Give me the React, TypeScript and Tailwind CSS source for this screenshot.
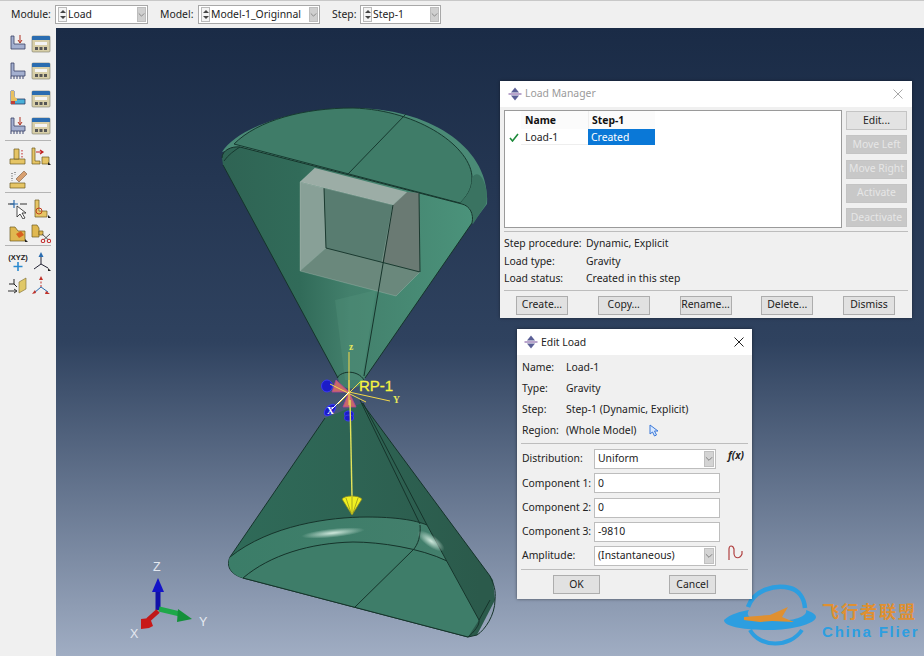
import React from "react";

const FONT = "font-['Noto_Sans',sans-serif]";

function Chevron() {
  return (
    <svg width="9" height="6" viewBox="0 0 9 6" fill="none" stroke="#777" strokeWidth="1">
      <path d="M1 1l3.5 3.5L8 1" />
    </svg>
  );
}

function Spinner() {
  return (
    <div className="w-[9px] mx-[1px] self-stretch border border-[#bbb] flex flex-col items-center justify-around bg-[#f4f4f4]">
      <span className="w-0 h-0 border-x-[3px] border-x-transparent border-b-[3px] border-b-[#444]" />
      <span className="w-0 h-0 border-x-[3px] border-x-transparent border-t-[3px] border-t-[#444]" />
    </div>
  );
}

function TopCombo({ text, w }: { text: string; w: string }) {
  return (
    <div className={`${w} h-[19px] flex items-stretch bg-white border border-[#a8a8a8] p-[1px]`}>
      <Spinner />
      <span className="flex-1 pl-[0px] text-[10.4px] leading-[15px] text-[#222] whitespace-nowrap">{text}</span>
      <div className="w-[9px] bg-[#cfcfcf] border border-[#bdbdbd] flex items-center justify-center">
        <Chevron />
      </div>
    </div>
  );
}

const Ls = {
  a: <path d="M3 2h3v8h11v5H3z" fill="#a4b0d0" stroke="#3a4266" strokeWidth=".8" />,
  tick: <path d="M3 15v3M6 15v3M9 15v3M12 15v3M15 15v3" stroke="#3a4470" strokeWidth="1" />,
  arrow: <path d="M12 1v7M10 6l2 3 2-3" stroke="#b03020" strokeWidth="1" fill="none" />,
};

function Icon({ kind }: { kind: string }) {
  let body: React.ReactNode = null;
  if (kind === "l1") body = <>{Ls.a}{Ls.arrow}</>;
  if (kind === "l2") body = <>{Ls.a}{Ls.tick}</>;
  if (kind === "l3")
    body = (
      <>
        <path d="M3 2h3v8h11v5H3z" fill="#4ab0d8" stroke="#2a3a66" strokeWidth=".8" />
        <path d="M3 2h3v5l3 3v2H3z" fill="#e8c060" />
        <path d="M3 12h4v3H3z" fill="#c04038" />
      </>
    );
  if (kind === "l4") body = <>{Ls.a}{Ls.tick}{Ls.arrow}</>;
  if (kind === "t")
    body = (
      <>
        <rect x="1" y="2" width="18" height="16" rx="1" fill="#d8cfa8" stroke="#7a7a6a" strokeWidth=".6" />
        <path d="M1 3a1 1 0 0 1 1-1h16a1 1 0 0 1 1 1v3H1z" fill="#2a6cb0" />
        <rect x="4" y="8" width="12" height="3" fill="#f4f4f4" />
        <rect x="4" y="13" width="3" height="3" fill="#555" />
        <rect x="8.5" y="13" width="3" height="3" fill="#555" />
        <rect x="13" y="13" width="3" height="3" fill="#555" />
      </>
    );
  if (kind === "p1")
    body = (
      <>
        <path d="M2 13h15v5H2z" fill="#e6c565" stroke="#6a5a20" strokeWidth=".7" />
        <path d="M6 3h5v10H6z" fill="#e6c565" stroke="#6a5a20" strokeWidth=".7" />
        <path d="M14 4v8" stroke="#c02020" strokeWidth="1" strokeDasharray="1.5 1.5" />
      </>
    );
  if (kind === "p2")
    body = (
      <>
        <path d="M1 2h3v13h5v3H1z" fill="#e6c565" stroke="#6a5a20" strokeWidth=".7" />
        <path d="M11 11h7v7h-7z" fill="#e6c565" stroke="#6a5a20" strokeWidth=".7" />
        <path d="M5 6h6M9 4l3 2-3 2" stroke="#c02020" strokeWidth="1.2" fill="none" />
        <path d="M17 16l3 3h-3z" fill="#222" />
      </>
    );
  if (kind === "p3")
    body = (
      <>
        <path d="M2 13h15v5H2z" fill="#e6c565" stroke="#6a5a20" strokeWidth=".7" />
        <path d="M8 9l8-8 3 3-8 8z" fill="#d8a070" stroke="#7a5a40" strokeWidth=".6" />
        <path d="M4 3v8M7 2v3" stroke="#444" strokeWidth="1" strokeDasharray="1 1.5" />
      </>
    );
  if (kind === "s1")
    body = (
      <>
        <path d="M0 5h6M12 5h7" stroke="#333" strokeWidth="1" />
        <path d="M6 1v8M2 5h8" stroke="#2a6cb0" strokeWidth="1.2" />
        <path d="M9 7v11l3-3 3 5 2-1-3-5h4z" fill="#fff" stroke="#222" strokeWidth=".8" />
      </>
    );
  if (kind === "s2")
    body = (
      <>
        <path d="M4 1h4v11h8v6H4z" fill="#e6c565" stroke="#6a5a20" strokeWidth=".7" />
        <circle cx="8" cy="12" r="3" fill="none" stroke="#c04020" strokeWidth="1" />
        <path d="M17 16l3 3h-3z" fill="#222" />
      </>
    );
  if (kind === "s3")
    body = (
      <>
        <path d="M2 4h5l3 4h7v10H2z" fill="#e0b850" stroke="#6a5a20" strokeWidth=".7" />
        <path d="M8 11l5-3 3 4-5 3z" fill="#d86020" />
        <path d="M17 16l3 3h-3z" fill="#222" />
      </>
    );
  if (kind === "s4")
    body = (
      <>
        <path d="M1 2h5l2 3v9H1z" fill="#e0b850" stroke="#6a5a20" strokeWidth=".7" />
        <path d="M8 8h4v4H8z" fill="#e0b850" stroke="#6a5a20" strokeWidth=".7" />
        <circle cx="12" cy="18" r="1.8" fill="none" stroke="#c02020" />
        <circle cx="18" cy="18" r="1.8" fill="none" stroke="#c02020" />
        <path d="M13 16.5L19 11M17 16.5L11 11" stroke="#555" />
      </>
    );
  if (kind === "x1")
    body = (
      <>
        <text x="10" y="8" textAnchor="middle" fontSize="7.5" fontWeight="700" fill="#222" fontFamily="Liberation Sans">(XYZ)</text>
        <path d="M10 10v9M5.5 14.5h9" stroke="#2a8ad0" strokeWidth="1.6" />
      </>
    );
  if (kind === "x2")
    body = (
      <>
        <path d="M10 3v9M10 12l-7 5M10 12l7 4" stroke="#223" strokeWidth="1" />
        <path d="M10 0l-2.5 5h5z" fill="#2a6cb0" />
        <path d="M17 16l3 3h-3z" fill="#222" />
      </>
    );
  if (kind === "x3")
    body = (
      <>
        <path d="M11 6l7-4v11l-7 4z" fill="#e0c868" stroke="#7a6a30" strokeWidth=".6" />
        <path d="M6 3v5H1M6 8l3 3" stroke="#222" strokeWidth="1" />
        <path d="M0 15h8M6 13l3 2-3 2" stroke="#333" fill="none" />
      </>
    );
  if (kind === "x4")
    body = (
      <>
        <path d="M10 2v9" stroke="#c03028" strokeWidth="1" strokeDasharray="2 1.5" />
        <path d="M10 11l-7 6M10 11l7 5" stroke="#2a6cb0" strokeWidth="1" />
        <path d="M10 0l-2 4h4zM1 18l3-4 1 3zM19 18l-4-3-1 3z" fill="#c03028" />
      </>
    );
  return (
    <svg width="20" height="20" viewBox="0 0 20 20" fill="none">
      {body}
    </svg>
  );
}

function IconRow({ a, b, h }: { a: string; b?: string; h: string }) {
  return (
    <div className={`${h} flex items-center pl-[8px] gap-[3px]`}>
      <Icon kind={a} />
      {b ? <Icon kind={b} /> : null}
    </div>
  );
}

function Sidebar() {
  return (
    <div className="w-[56px] shrink-0 bg-[#f0f0f0] pt-[2px]">
      <IconRow a="l1" b="t" h="h-[27.5px]" />
      <IconRow a="l2" b="t" h="h-[27.5px]" />
      <IconRow a="l3" b="t" h="h-[27.5px]" />
      <IconRow a="l4" b="t" h="h-[27.5px]" />
      <div className="h-[1px] mx-[5px] bg-[#b4b4b4] mb-[3px]" />
      <IconRow a="p1" b="p2" h="h-[24px]" />
      <IconRow a="p3" h="h-[24px]" />
      <div className="h-[1px] mx-[5px] bg-[#b4b4b4] mb-[4px]" />
      <IconRow a="s1" b="s2" h="h-[24px]" />
      <IconRow a="s3" b="s4" h="h-[24px]" />
      <div className="h-[1px] mx-[5px] bg-[#b4b4b4] mb-[4px]" />
      <IconRow a="x1" b="x2" h="h-[24px]" />
      <IconRow a="x3" b="x4" h="h-[24px]" />
    </div>
  );
}

function WinLogo() {
  return (
    <svg width="14" height="14" viewBox="0 0 14 14">
      <path d="M7 0.5L11 5.5H3z" fill="#5a5f96" />
      <path d="M7 13.5L3 8.5h8z" fill="#5a5f96" />
      <rect x="0.5" y="6.2" width="13" height="1.6" fill="#a890c0" />
    </svg>
  );
}

function CloseX({ color }: { color: string }) {
  return (
    <svg width="10" height="10" viewBox="0 0 10 10" stroke={color} strokeWidth="1" fill="none">
      <path d="M0.5 0.5l9 9M9.5 0.5l-9 9" />
    </svg>
  );
}

function SideBtn({ text, off }: { text: string; off?: boolean }) {
  return (
    <div
      className={`h-[19px] flex items-center justify-center border border-[#c4c4c4] text-[10.4px] whitespace-nowrap ${
        off ? "bg-[#c8c8c8] text-[#e6e6e6]" : "bg-[#e3e3e3] text-[#222]"
      }`}
    >
      {text}
    </div>
  );
}

function BottomBtn({ text, w = "w-[52px]" }: { text: string; w?: string }) {
  return (
    <div className={`${w} h-[19px] flex items-center justify-center bg-[#e1e1e1] border border-[#adadad] text-[10.4px] text-[#222]`}>
      {text}
    </div>
  );
}

function LoadManager() {
  return (
    <div className="absolute left-[500px] top-[81px] w-[412px] h-[237px] bg-[#f0f0f0] flex flex-col shadow-[0_0_3px_rgba(0,0,0,0.4)]">
      <div className="h-[26px] shrink-0 bg-white flex items-center pl-[8px] pr-[9px] gap-[3px]">
        <WinLogo />
        <span className="flex-1 text-[10.4px] text-[#9a9a9a]">Load Manager</span>
        <CloseX color="#a8a8a8" />
      </div>
      <div className="flex shrink-0 pl-[4px] pr-[5px] pt-[3px] gap-[4px]">
        <div className="w-[338px] h-[118px] bg-white border border-[#9a9a9a]">
          <div className="flex h-[18px] items-center text-[10.4px] font-bold text-[#111]">
            <span className="w-[16px]" />
            <span className="w-[67px] pl-[4px] bg-[#fbfbfb] h-full leading-[18px]">Name</span>
            <span className="w-[67px] pl-[3px] bg-[#fbfbfb] border-l border-[#eee] h-full leading-[18px]">Step-1</span>
          </div>
          <div className="flex h-[16px] items-center text-[10.4px] text-[#222]">
            <span className="w-[16px] pl-[4px] text-[#1d8a3a]">
              <svg width="10" height="9" viewBox="0 0 10 9" fill="none" stroke="#1d8a3a" strokeWidth="1.6"><path d="M1 5l2.5 3L9 1" /></svg>
            </span>
            <span className="w-[67px] pl-[4px] border-b border-[#eee] h-full leading-[16px]">Load-1</span>
            <span className="w-[67px] pl-[3px] bg-[#0a78d7] text-white h-full leading-[16px]">Created</span>
          </div>
        </div>
        <div className="w-[61px] flex flex-col gap-[5.25px] pt-[1px]">
          <SideBtn text="Edit..." />
          <SideBtn text="Move Left" off />
          <SideBtn text="Move Right" off />
          <SideBtn text="Activate" off />
          <SideBtn text="Deactivate" off />
        </div>
      </div>
      <div className="h-[1px] shrink-0 bg-[#bdbdbd] mx-[4px] mt-[3px]" />
      <div className="px-[4px] pt-[3px] text-[10.4px] text-[#222] leading-[17.5px] whitespace-nowrap">
        <div className="flex"><span className="w-[82px]">Step procedure:</span><span>Dynamic, Explicit</span></div>
        <div className="flex"><span className="w-[82px]">Load type:</span><span>Gravity</span></div>
        <div className="flex"><span className="w-[82px]">Load status:</span><span>Created in this step</span></div>
      </div>
      <div className="h-[1px] shrink-0 bg-[#bdbdbd] mx-[4px] mt-[2px]" />
      <div className="flex pl-[16px] pr-[17px] pt-[5px] justify-between">
        <BottomBtn text="Create..." />
        <BottomBtn text="Copy..." />
        <BottomBtn text="Rename..." />
        <BottomBtn text="Delete..." />
        <BottomBtn text="Dismiss" />
      </div>
    </div>
  );
}

function Field({ label, value, combo }: { label: string; value: string; combo?: boolean }) {
  return (
    <div className="flex items-center h-[24.25px] text-[10.4px] text-[#222]">
      <span className="w-[72px] shrink-0 whitespace-nowrap">{label}</span>
      {combo ? (
        <div className="w-[122px] h-[20px] bg-white border border-[#bdbdbd] flex items-center pl-[3px] pr-[1px]">
          <span className="flex-1">{value}</span>
          <div className="w-[10px] h-[16px] bg-[#d4d4d4] border border-[#c0c0c0] flex items-center justify-center">
            <Chevron />
          </div>
        </div>
      ) : (
        <div className="w-[126px] h-[20px] bg-white border border-[#bdbdbd] flex items-center pl-[3px]">{value}</div>
      )}
    </div>
  );
}

function EditLoad() {
  return (
    <div className="absolute left-[517px] top-[329px] w-[235px] h-[270px] bg-[#f0f0f0] flex flex-col shadow-[0_0_3px_rgba(0,0,0,0.5)]">
      <div className="h-[26px] shrink-0 bg-white flex items-center pl-[7px] pr-[8px] gap-[3px]">
        <WinLogo />
        <span className="flex-1 text-[10.4px] text-[#222] pt-[1px]">Edit Load</span>
        <CloseX color="#222" />
      </div>
      <div className="pl-[5px] pt-[2px] text-[10.4px] text-[#222] leading-[21px]">
        <div className="flex"><span className="w-[44px]">Name:</span><span>Load-1</span></div>
        <div className="flex"><span className="w-[44px]">Type:</span><span>Gravity</span></div>
        <div className="flex"><span className="w-[44px]">Step:</span><span>Step-1 (Dynamic, Explicit)</span></div>
        <div className="flex items-center">
          <span className="w-[44px]">Region:</span>
          <span>(Whole Model)</span>
          <svg className="ml-[12px]" width="10" height="13" viewBox="0 0 10 13" fill="#d8e8ff" stroke="#3a78d8" strokeWidth="1">
            <path d="M1 1v9l2.5-2 2 4 2-1-2-4H9z" />
          </svg>
        </div>
      </div>
      <div className="h-[1px] shrink-0 bg-[#bdbdbd] mx-[4px] mt-[2px]" />
      <div className="relative pl-[5px] pt-[3px]">
        <Field label="Distribution:" value="Uniform" combo />
        <Field label="Component 1:" value="0" />
        <Field label="Component 2:" value="0" />
        <Field label="Component 3:" value="-9810" />
        <Field label="Amplitude:" value="(Instantaneous)" combo />
        <span className="absolute left-[211px] top-[4px] text-[10px] italic font-bold text-[#222]">f(x)</span>
        <svg className="absolute left-[211px] top-[100px]" width="16" height="17" viewBox="0 0 16 17" fill="none" stroke="#b04040" strokeWidth="1.2">
          <path d="M1 16V5C1 1 5 1 6 5V10C7 15 12 15 14 10V7" />
        </svg>
      </div>
      <div className="h-[1px] shrink-0 bg-[#bdbdbd] mx-[4px] mt-[1px]" />
      <div className="flex pl-[36px] pr-[36px] pt-[5px] justify-between">
        <BottomBtn text="OK" w="w-[47px]" />
        <BottomBtn text="Cancel" w="w-[47px]" />
      </div>
    </div>
  );
}

function Model() {
  return (
    <svg className="absolute inset-0" width="868" height="628" viewBox="56 28 868 628">
      <defs>
        <linearGradient id="cone1" x1="225" y1="0" x2="475" y2="0" gradientUnits="userSpaceOnUse">
          <stop offset="0" stopColor="#2f6454" />
          <stop offset=".3" stopColor="#316b59" />
          <stop offset=".5" stopColor="#43806c" />
          <stop offset="1" stopColor="#4b937b" />
        </linearGradient>
        <linearGradient id="cone2" x1="240" y1="0" x2="480" y2="0" gradientUnits="userSpaceOnUse">
          <stop offset="0" stopColor="#2f6a58" />
          <stop offset=".45" stopColor="#2e6454" />
          <stop offset="1" stopColor="#2b5a4b" />
        </linearGradient>
        <linearGradient id="rim" x1="228" y1="0" x2="440" y2="0" gradientUnits="userSpaceOnUse">
          <stop offset="0" stopColor="#3b7d68" />
          <stop offset="1" stopColor="#437f6c" />
        </linearGradient>
        <radialGradient id="hl1"><stop offset="0" stopColor="#cfe8dc" /><stop offset="1" stopColor="#cfe8dc" stopOpacity="0" /></radialGradient>
      </defs>

      {/* upper cone, far half-disc */}
      <path d="M222 152C238 127 296 108 353 108C430 108 491 148 487 204L472 224L240 147z" fill="#4a8a76" />
      <path d="M234 144C258 120 304 108 353 108C420 110 472 148 472 178C472 190 466 197 460 203z" fill="#3f7c68" stroke="#173a30" strokeWidth="1" />
      <path d="M406 114L348 174" stroke="#173a30" strokeWidth="1" />
      <path d="M472 178C472 190 466 197 460 203C472 206 474 214 473 224L486 204C490 190 480 165 472 178z" fill="#3a7361" />
      {/* upper cone body */}
      <path d="M222 158C222 150 232 146 240 147L462 204C470 206 474 214 472 223L365 378C360 392 340 392 338 378L223 165z" fill="url(#cone1)" />
      <path d="M222 158C222 150 232 146 240 147L462 204C470 206 474 214 472 223L365 378M338 378L223 165" fill="none" stroke="#16342b" strokeWidth="1" />
      <path d="M224 161C228 155 235 150 240 147" stroke="#173a30" strokeWidth="1" fill="none" />
      <path d="M335 300L345 380L362 380L376 290z" fill="#5c9a85" opacity=".25" />

      {/* box */}
      <path d="M300 182L315 168L407 192L393 205z" fill="#9cada6" />
      <path d="M300 182L324 188L326 248L300 271z" fill="#88a097" />
      <path d="M324 188L393 205L382 262L326 248z" fill="#587c70" />
      <path d="M393 205L407 192L419 193L420 272L382 262z" fill="#6a7a73" />
      <path d="M326 248L420 272L396 296L300 271z" fill="#6a887c" />
      <path d="M324 188L326 248L420 272L419 193" fill="none" stroke="#1c3a30" strokeWidth="1" />
      <path d="M300 182V271L396 296L420 272M393 205L382 262M300 271L326 248M315 168L300 182L324 188L393 205L407 192" fill="none" stroke="#dfe8e4" strokeWidth=".6" strokeOpacity=".35" />
      <path d="M393 205L364 376" stroke="#16342b" strokeWidth="1" />

      {/* lower cone */}
      <path d="M325 418L230 557C226 566 230 574 243 578L468 637L477 635L495 600L493 580L362 403z" fill="url(#cone2)" />
      <path d="M325 418L230 557C226 566 230 574 243 578L468 637L477 635C485 630 495 615 495 600C496 590 494 585 490 576L362 403" fill="none" stroke="#16342b" strokeWidth="1" />
      <path d="M230 557C270 525 330 517 367 517C395 517 415 520 427 525L447 561C420 548 380 542 353 542C310 543 270 555 243 578C232 575 226 566 230 557z" fill="url(#rim)" />
      <path d="M243 578C270 555 310 543 353 542C380 542 420 548 447 561L479 620L468 637z" fill="#3e7d69" />
      <path d="M230 557C270 525 330 517 367 517C395 517 415 520 427 525M243 578C270 555 310 543 353 542C380 542 420 548 447 561M355 607L413 550C418 545 421 535 420 525M468 637C474 632 480 625 479 620L427 525M360 400L420 524M363 403L427 525M479 620L490 600" fill="none" stroke="#16342b" strokeWidth="1" />
      <path d="M468 637L243 578" stroke="#16342b" strokeWidth="1" />
      <ellipse cx="333" cy="533" rx="32" ry="4.5" fill="url(#hl1)" transform="rotate(-6 333 533)" />
      <ellipse cx="431" cy="541" rx="16" ry="6" fill="url(#hl1)" transform="rotate(35 431 541)" />

      {/* load symbols */}
      <path d="M337 378C342 370 358 370 364 380" fill="none" stroke="#16342b" strokeWidth="1" />
      <g fill="#1c1cc8" stroke="#3a3af0" strokeWidth="1">
        <ellipse cx="327" cy="386" rx="5.5" ry="6" />
        <ellipse cx="330" cy="410" rx="4" ry="7" transform="rotate(45 330 410)" />
        <ellipse cx="349" cy="414" rx="4.5" ry="3" />
        <ellipse cx="349" cy="418" rx="4.5" ry="3" />
      </g>
      <g fill="#c86a68" stroke="#b040a0" strokeWidth=".8">
        <path d="M336 380L349 392L332 392z" />
        <path d="M349 392L343 407L356 407z" />
      </g>
      <path d="M349 392V352M349 392L390 401M330 384L366 402M338 404L360 382M349 380V405" stroke="#f4d84a" strokeWidth="1" />
      <path d="M349 392L332 409" stroke="#ffffff" strokeWidth="1" />
      <path d="M350 400L352 497" stroke="#e4e45a" strokeWidth="1.4" />
      <path d="M342 499C345 495 358 495 362 499L352 515z" fill="#f0f020" stroke="#8a8a20" strokeWidth=".8" />
      <path d="M346 498L351 513M352 497V513M358 498L353 513" stroke="#8a8a20" strokeWidth=".7" />
      <g fontFamily="Liberation Serif" fontWeight="700" fontSize="9.5">
        <text x="349" y="350" fill="#e8e85a">z</text>
        <text x="393" y="403" fill="#e8e85a">Y</text>
        <text x="327" y="414" fill="#ffffff">X</text>
      </g>
      <text x="359" y="391" fill="#f8f440" stroke="#f8f440" strokeWidth=".3" fontSize="15" fontFamily="Liberation Sans">RP-1</text>

      {/* triad */}
      <path d="M158 610V589" stroke="#1212a8" strokeWidth="5" />
      <path d="M158 578L152 592H164z" fill="#1414c8" />
      <path d="M159 609L180 614" stroke="#1ea84a" strokeWidth="5" />
      <path d="M192 619L178 609L177 622z" fill="#14903a" />
      <path d="M158 611L148 620" stroke="#c01818" strokeWidth="5" />
      <path d="M141 629L141 619L150 618L153 626L149 628z" fill="#c81818" />
      <g fill="#e4e8f0" fontSize="12.5" fontFamily="Liberation Sans">
        <text x="153" y="571">Z</text>
        <text x="199" y="626">Y</text>
        <text x="130" y="638">X</text>
      </g>

      {/* watermark */}
      <g fill="none" stroke="#2d9ee0">
        <path d="M748 607C754 590 775 584 790 588C798 590 804 597 805 608" strokeWidth="4.5" />
        <path d="M750 630C760 648 790 648 802 630" strokeWidth="4" />
      </g>
      <path d="M724 620C730 614 742 611 749 610C745 616 750 621 775 621C795 621 808 616 806 610C806 610 816 613 816 617C816 624 790 630 770 630C745 630 724 627 724 620z" fill="#2d9ee0" />
      <path d="M744 617L770 615L788 607L782 617L794 622L772 621L760 622L744 620z" fill="#e09030" />
    </svg>
  );
}

export default function App() {
  return (
    <div className={`w-[924px] h-[656px] overflow-hidden flex flex-col bg-[#f0f0f0] ${FONT}`}>
      <div className="h-[28px] shrink-0 flex items-center bg-[#f0f0f0] border-t border-[#c8c8c8] text-[10.4px] text-[#222]">
        <span className="ml-[11px] w-[44px]">Module:</span>
        <TopCombo text="Load" w="w-[93px]" />
        <span className="ml-[12px] w-[38px]">Model:</span>
        <TopCombo text="Model-1_Originnal" w="w-[122px]" />
        <span className="ml-[12px] w-[28px]">Step:</span>
        <TopCombo text="Step-1" w="w-[81px]" />
      </div>
      <div className="flex flex-1 min-h-0">
        <Sidebar />
        <div className="flex-1 relative bg-[linear-gradient(180deg,#1a2b46_0%,#2f425f_50%,#a0adc3_100%)]">
          <Model />
          <span className="absolute left-[766px] top-[574px] text-[17px] font-bold leading-none tracking-[2px] text-[#e09030] font-['Noto_Sans_CJK_SC',sans-serif]">飞行者联盟</span>
          <span className="absolute left-[766px] top-[596px] text-[15px] leading-none tracking-[1.8px] text-[#2d9ee0] font-['Liberation_Sans',sans-serif] font-bold">China Flier</span>
        </div>
      </div>
      <div className="absolute inset-0 pointer-events-none">
        <div className="relative w-[924px] h-[656px]">
          <LoadManager />
          <EditLoad />
        </div>
      </div>
    </div>
  );
}
